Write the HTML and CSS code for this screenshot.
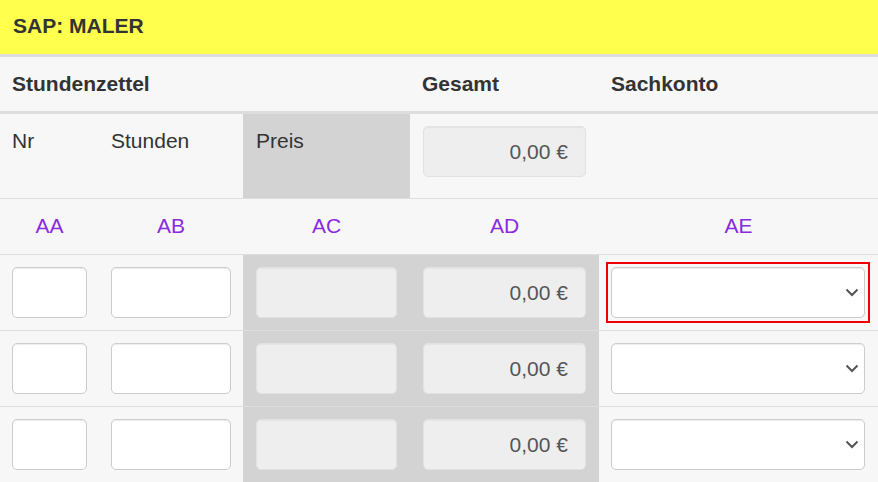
FILE: index.html
```html
<!DOCTYPE html>
<html lang="de">
  <head>
    <meta charset="UTF-8" />
    <meta name="viewport" content="width=device-width, initial-scale=1.0" />
    <title>SAP: MALER</title>
    <link rel="stylesheet" href="styles.css">
  </head>
  <body>
    <div class="title-bar">SAP: MALER</div>

    <div class="sheet">
      <div class="row head-row">
        <div class="cell span-3 strong">Stundenzettel</div>
        <div class="cell strong">Gesamt</div>
        <div class="cell strong">Sachkonto</div>
      </div>

      <div class="row label-row">
        <div class="cell">Nr</div>
        <div class="cell">Stunden</div>
        <div class="cell shaded">Preis</div>
        <div class="cell">
          <input class="field readonly money" type="text" value="0,00 €" disabled>
        </div>
        <div class="cell"></div>
      </div>

      <div class="row key-row">
        <div class="cell">AA</div>
        <div class="cell">AB</div>
        <div class="cell">AC</div>
        <div class="cell">AD</div>
        <div class="cell">AE</div>
      </div>

      <div class="row input-row">
        <div class="cell"><input class="field" type="text"></div>
        <div class="cell"><input class="field" type="text"></div>
        <div class="cell shaded"><input class="field readonly" type="text" disabled></div>
        <div class="cell shaded"><input class="field readonly money" type="text" value="0,00 €" disabled></div>
        <div class="cell">
          <div class="select-wrap active">
            <select class="field select"><option></option></select>
            <svg class="chevron" width="14" height="9" viewBox="0 0 14 9"><path d="M1.5 1.5 L7 7 L12.5 1.5" fill="none" stroke="#555" stroke-width="2"/></svg>
          </div>
        </div>
      </div>

      <div class="row input-row">
        <div class="cell"><input class="field" type="text"></div>
        <div class="cell"><input class="field" type="text"></div>
        <div class="cell shaded"><input class="field readonly" type="text" disabled></div>
        <div class="cell shaded"><input class="field readonly money" type="text" value="0,00 €" disabled></div>
        <div class="cell">
          <div class="select-wrap">
            <select class="field select"><option></option></select>
            <svg class="chevron" width="14" height="9" viewBox="0 0 14 9"><path d="M1.5 1.5 L7 7 L12.5 1.5" fill="none" stroke="#555" stroke-width="2"/></svg>
          </div>
        </div>
      </div>

      <div class="row input-row">
        <div class="cell"><input class="field" type="text"></div>
        <div class="cell"><input class="field" type="text"></div>
        <div class="cell shaded"><input class="field readonly" type="text" disabled></div>
        <div class="cell shaded"><input class="field readonly money" type="text" value="0,00 €" disabled></div>
        <div class="cell">
          <div class="select-wrap">
            <select class="field select"><option></option></select>
            <svg class="chevron" width="14" height="9" viewBox="0 0 14 9"><path d="M1.5 1.5 L7 7 L12.5 1.5" fill="none" stroke="#555" stroke-width="2"/></svg>
          </div>
        </div>
      </div>
    </div>
  </body>
</html>
```

FILE: styles.css
```css
:root {
  --yellow: #ffff4d;
  --page-bg: #f7f7f7;
  --shade: #d3d3d3;
  --line: #dddddd;
  --text-color: #333333;
  --key-color: #8a2be2;
  font-family: "Liberation Sans", Arial, Helvetica, sans-serif;
}

* {
  box-sizing: border-box;
}

body {
  margin: 0;
  background-color: var(--page-bg);
  color: var(--text-color);
  font-size: 21px;
  line-height: 30px;
  overflow: hidden;
}

.title-bar {
  height: 57px;
  padding: 0 13px;
  display: flex;
  align-items: center;
  padding-bottom: 2px;
  background-color: var(--yellow);
  border-bottom: 3px solid var(--line);
  font-weight: bold;
}

.row {
  display: grid;
  grid-template-columns: 99px 144px 167px 189px 1fr;
  border-bottom: 1px solid var(--line);
}

.cell {
  padding: 12px 12px 0 12px;
}

.cell:nth-child(n+3) {
  padding-left: 13px;
  padding-right: 13px;
}

.cell:last-child {
  padding-left: 12px;
}

.span-3 {
  grid-column: span 3;
}

.strong {
  font-weight: bold;
}

.shaded {
  background-color: var(--shade);
}

.head-row {
  height: 57px;
  border-bottom: 3px solid var(--line);
}

.label-row {
  height: 85px;
}

.key-row {
  height: 56px;
  text-align: center;
  color: var(--key-color);
}

.key-row .cell {
  padding-left: 0;
  padding-right: 0;
}

.input-row {
  height: 76px;
}

.field {
  display: block;
  width: 100%;
  height: 51px;
  margin: 0;
  padding: 0 17px;
  font: inherit;
  color: #555555;
  background-color: #ffffff;
  border: 1px solid #cccccc;
  border-radius: 5px;
  box-shadow: inset 0 1px 1px rgba(0, 0, 0, 0.075);
}

.field.readonly {
  background-color: #eeeeee;
  border-color: #e2e2e2;
  box-shadow: inset 0 1px 1px rgba(0, 0, 0, 0.04);
}

.money {
  text-align: right;
  -webkit-text-fill-color: #555555;
  opacity: 1;
}

.select-wrap {
  position: relative;
}

/* square red frame around the selected dropdown */
.select-wrap.active::after {
  content: "";
  position: absolute;
  top: -5px;
  left: -5px;
  right: -5px;
  bottom: -5px;
  border: 2px solid #ee0000;
  pointer-events: none;
}

.select {
  appearance: none;
  -webkit-appearance: none;
}

.chevron {
  position: absolute;
  right: 6px;
  top: 21px;
  pointer-events: none;
}
```
